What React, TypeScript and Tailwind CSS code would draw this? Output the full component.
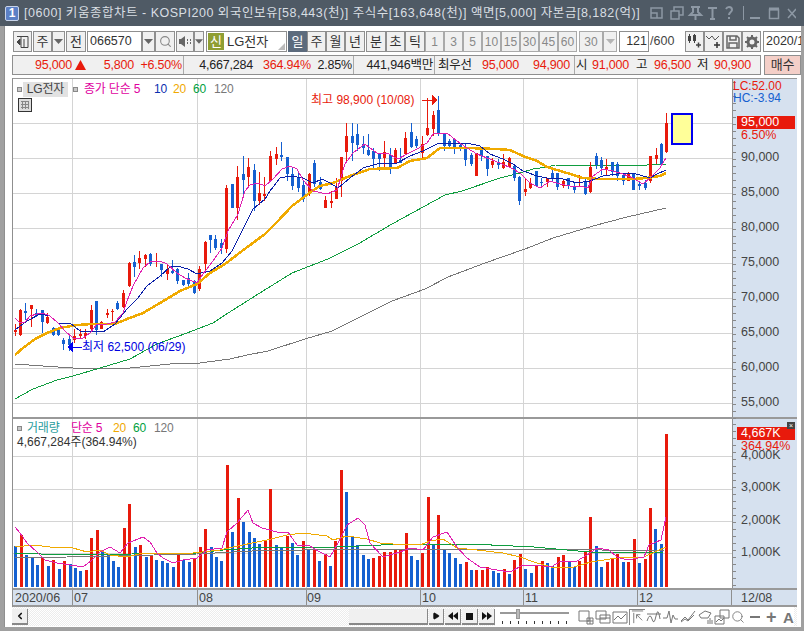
import type { ReactNode } from "react";
import { ChevronLeft, Play, Search } from "lucide-react";

// x, high, body top, body bottom, low, colour (page pixels)
type Candle = [number, number, number, number, number, "r" | "b"];

const candles: Candle[] = [
  [15, 323, 329, 331, 335, "r"], [20, 308, 309, 334, 335, "r"], [25, 302, 310, 312, 319, "b"], [31, 304, 304, 308, 326, "r"],
  [36, 308, 312, 315, 316, "b"], [42, 309, 309, 321, 332, "b"], [47, 312, 316, 322, 323, "r"], [53, 326, 327, 334, 335, "b"],
  [58, 327, 327, 334, 335, "b"], [63, 337, 339, 343, 349, "b"], [69, 335, 338, 344, 350, "b"], [74, 328, 335, 339, 342, "r"],
  [80, 328, 333, 335, 337, "r"], [85, 328, 332, 335, 338, "r"], [91, 304, 309, 328, 329, "r"], [96, 300, 300, 329, 334, "b"],
  [101, 320, 321, 328, 328, "r"], [107, 308, 312, 314, 317, "r"], [112, 308, 310, 311, 320, "r"], [117, 300, 302, 308, 309, "b"],
  [123, 289, 292, 306, 307, "r"], [129, 261, 262, 285, 286, "r"], [134, 254, 261, 266, 276, "b"], [139, 250, 257, 262, 268, "r"],
  [145, 253, 254, 258, 266, "r"], [150, 252, 253, 263, 265, "b"], [156, 252, 260, 261, 266, "r"], [161, 263, 263, 269, 276, "b"],
  [167, 263, 268, 273, 279, "r"], [172, 259, 270, 272, 273, "b"], [177, 267, 268, 280, 283, "b"], [183, 279, 279, 284, 285, "b"],
  [188, 272, 277, 283, 285, "b"], [194, 279, 280, 292, 293, "b"], [199, 265, 268, 288, 290, "r"], [205, 240, 241, 263, 270, "r"],
  [210, 234, 234, 239, 252, "b"], [215, 234, 238, 247, 249, "b"], [221, 238, 242, 247, 253, "b"], [226, 184, 187, 248, 252, "r"],
  [232, 183, 183, 207, 207, "b"], [237, 165, 176, 207, 219, "r"], [243, 155, 173, 179, 193, "b"], [248, 157, 166, 176, 185, "r"],
  [254, 163, 169, 200, 210, "b"], [259, 171, 192, 200, 204, "r"], [264, 176, 193, 195, 200, "r"], [270, 150, 155, 180, 181, "r"],
  [276, 146, 153, 158, 164, "r"], [281, 141, 154, 156, 160, "b"], [287, 156, 156, 173, 180, "b"], [292, 166, 173, 185, 189, "b"],
  [298, 170, 177, 187, 191, "b"], [303, 180, 184, 198, 201, "b"], [309, 172, 173, 192, 195, "r"], [314, 159, 162, 183, 186, "b"],
  [320, 176, 181, 188, 189, "b"], [325, 195, 199, 207, 207, "r"], [331, 190, 200, 202, 207, "r"], [336, 177, 186, 198, 198, "r"],
  [341, 156, 156, 180, 196, "r"], [346, 122, 135, 151, 160, "r"], [352, 122, 135, 142, 160, "b"], [357, 123, 133, 144, 150, "b"],
  [363, 135, 143, 147, 153, "b"], [368, 133, 149, 154, 155, "b"], [373, 147, 150, 158, 168, "b"], [379, 152, 152, 158, 170, "b"],
  [384, 140, 151, 157, 166, "r"], [390, 147, 154, 167, 173, "b"], [395, 147, 149, 162, 162, "r"], [400, 147, 159, 162, 162, "b"],
  [405, 131, 137, 153, 153, "r"], [411, 122, 131, 146, 147, "b"], [416, 135, 138, 145, 147, "b"], [422, 135, 143, 152, 158, "r"],
  [427, 97, 127, 134, 135, "r"], [433, 110, 114, 128, 135, "r"], [438, 95, 109, 133, 135, "b"], [444, 132, 132, 145, 150, "b"],
  [449, 138, 140, 145, 148, "b"], [454, 137, 138, 147, 153, "b"], [460, 142, 144, 147, 150, "b"], [465, 143, 146, 159, 165, "b"],
  [471, 152, 154, 163, 165, "b"], [476, 152, 152, 175, 175, "r"], [481, 147, 147, 155, 160, "b"], [487, 155, 155, 168, 175, "b"],
  [492, 157, 160, 164, 167, "r"], [498, 158, 161, 164, 168, "b"], [503, 153, 161, 167, 168, "r"], [509, 156, 157, 166, 167, "r"],
  [514, 164, 165, 177, 180, "b"], [519, 175, 176, 200, 204, "b"], [525, 178, 188, 191, 195, "r"], [530, 177, 182, 187, 188, "r"],
  [536, 170, 170, 185, 185, "b"], [541, 177, 181, 182, 187, "b"], [547, 177, 177, 181, 186, "r"], [552, 168, 172, 177, 180, "b"],
  [557, 172, 172, 186, 189, "b"], [563, 178, 180, 185, 187, "r"], [568, 177, 177, 184, 188, "b"], [574, 182, 185, 189, 192, "b"],
  [579, 174, 181, 182, 185, "r"], [585, 178, 181, 193, 194, "b"], [590, 161, 166, 191, 192, "r"], [596, 152, 155, 164, 168, "b"],
  [601, 156, 159, 167, 174, "b"], [606, 158, 166, 168, 174, "r"], [612, 161, 161, 171, 175, "b"], [617, 161, 163, 175, 180, "b"],
  [623, 173, 174, 180, 184, "b"], [628, 171, 172, 180, 180, "r"], [633, 172, 172, 189, 189, "b"], [639, 180, 183, 185, 189, "b"],
  [645, 179, 182, 187, 189, "b"], [650, 155, 155, 180, 182, "r"], [656, 147, 154, 158, 163, "r"], [661, 142, 143, 164, 165, "b"],
  [666, 112, 122, 151, 152, "r"],
];

const ma5 = "15,317 20,322 25,321 30,315 37,313 43,312 50,315 58,322 65,330 73,337 83,337 90,332 97,323 107,323 115,321 123,312 127,300 133,285 143,267 150,261 160,260 167,263 177,272 185,277 197,282 203,273 213,260 222,247 228,230 238,213 245,190 250,184 258,182 265,185 273,178 282,168 290,165 297,168 303,179 313,190 327,193 337,189 345,163 353,152 365,143 377,152 387,152 398,158 407,153 417,148 427,142 433,133 447,132 457,140 467,147 477,153 487,157 500,162 513,168 520,172 530,182 540,187 550,180 560,183 570,185 580,185 588,187 593,175 603,168 613,170 623,173 633,177 643,183 650,177 660,167 666,157";
const ma10 = "15,329 27,320 40,313 50,315 58,322 70,322 80,330 97,330 103,331 115,323 127,308 138,297 147,285 160,275 170,266 177,265 188,268 197,273 210,270 222,262 232,250 242,230 253,208 265,198 270,190 280,177 290,175 303,177 313,182 322,178 330,182 338,187 350,177 363,167 380,162 397,162 410,155 423,150 437,143 450,142 467,142 480,145 490,153 503,158 513,163 523,170 537,175 547,177 563,178 577,182 590,180 603,175 617,173 633,172 650,177 657,173 666,169";
const ma20 = "15,354 23,347 35,338 47,332 60,327 77,324 92,323 115,323 127,318 143,312 160,302 180,290 197,283 210,272 225,263 242,250 265,233 277,221 292,205 312,190 320,185 333,182 350,175 370,168 397,167 410,160 427,157 440,147 467,147 497,148 510,149 523,155 537,160 547,166 567,172 583,177 600,178 617,178 633,178 647,177 660,175 666,172";
const ma60 = "15,398 33,388 57,379 73,375 100,367 130,358 157,343 187,332 213,322 225,314 255,295 292,272 328,258 358,243 392,223 445,194 462,190 500,177 520,172 533,168 547,166 555,164 590,165 617,164 647,164 666,163";
const ma120 = "15,363 43,365 73,367 130,367 170,363 200,362 230,358 247,354 268,350 305,338 332,330 358,317 392,300 425,288 448,276 485,262 525,248 553,237 593,225 627,216 666,207";

const volTops = [
  546, 535, 555, 558, 565, 557, 566, 560, 569, 561, 564, 568, 571, 570, 538, 530, 550, 555, 561, 567, 528, 504, 547, 545,
  557, 555, 560, 561, 563, 567, 555, 560, 562, 558, 547, 529, 547, 557, 561, 465, 532, 498, 522, 532, 538, 544, 540, 489,
  545, 548, 536, 543, 555, 541, 550, 549, 561, 554, 566, 541, 470, 492, 537, 545, 555, 559, 558, 556, 552, 552, 550, 550,
  533, 556, 560, 553, 497, 545, 515, 549, 553, 558, 564, 562, 570, 570, 570, 567, 571, 573, 569, 574, 560, 554, 569, 573,
  566, 561, 563, 566, 557, 555, 561, 567, 561, 552, 517, 546, 567, 562, 558, 554, 562, 562, 539, 563, 559, 508, 529, 544, 434,
];
const volColors =
  "brbbbrbrbrbbbrrrbbbbrrbrbrbbbbrbbrrrbbbrbrbbbbrr" +
  "bbrbbrbrbrbrrbbbbbrrrrrrrbbrrbrbbbbrbrrrbbrbrrbbr" +
  "rbbrrbbrrrbbrrrbrrbrrbbr";

const vMa5 = "15,527 20,533 27,543 37,552 45,560 57,563 70,565 83,567 92,560 100,552 110,547 120,553 128,543 143,537 150,542 157,553 163,558 173,563 183,560 197,558 207,550 222,548 227,532 237,523 248,510 253,523 262,528 270,530 280,533 288,532 297,545 308,545 320,552 330,557 338,543 347,525 358,518 365,525 370,543 383,557 400,552 410,548 423,550 433,537 447,532 457,547 467,558 480,567 497,570 510,572 523,565 534,565 551,567 561,561 577,561 587,555 597,548 609,550 617,557 627,560 644,557 649,545 661,540 666,517";
const vMa20 = "15,547 33,545 50,547 73,548 87,552 100,550 110,555 127,557 143,553 193,553 220,550 233,547 267,540 287,535 303,533 327,536 333,540 347,536 367,539 380,543 393,544 420,545 430,541 443,539 457,548 477,550 503,553 520,557 534,562 551,567 574,567 591,562 617,558 644,557 666,547";
const vMa60 = "15,553 67,555 197,553 223,550 267,547 337,547 403,544 470,544 534,547 567,550 601,553 664,552";
const vMa120 = "15,558 67,557 197,554 270,550 303,550 540,549 664,551";

const RED = "#e81a0c";
const BLUE = "#1560d0";

const priceGrid = [122, 157, 192, 227, 262, 297, 332, 367, 402];
const priceLabels = [
  ["90,000", 157], ["85,000", 192], ["80,000", 227], ["75,000", 262], ["70,000", 297],
  ["65,000", 332], ["60,000", 367], ["55,000", 402],
] as const;
const volGrid = [456, 489, 521, 553];
const volLabels = [["4,000K", 456], ["3,000K", 488], ["2,000K", 521], ["1,000K", 553]] as const;
const timeGrid = [72, 197, 306, 420, 523, 637];
const dates = [["2020/06", 15], ["07", 74], ["08", 199], ["09", 307], ["10", 422], ["11", 525], ["12", 639], ["12/08", 741]] as const;

function Btn({ className = "", children }: { className?: string; children?: ReactNode }) {
  return (
    <div className={`flex h-[21px] shrink-0 items-center justify-center border border-[#8f8f8f] bg-[#f0f0f0] text-[13px] text-[#333] ${className}`}>
      {children}
    </div>
  );
}

function Caret({ light }: { light?: boolean }) {
  return (
    <svg width="9" height="5" viewBox="0 0 9 5">
      <path d="M0 0h9L4.500 5z" fill={light ? "#b4b4b4" : "#666"} />
    </svg>
  );
}

function Val({ w, red, children }: { w: string; red?: boolean; children: ReactNode }) {
  return <span className={`shrink-0 text-right ${w} ${red ? "text-[#e81a0c]" : "text-[#222]"}`}>{children}</span>;
}

function TitleBar() {
  return (
    <div className="flex h-[26px] shrink-0 items-center bg-[#4f5a65] pl-[5px] pr-[8px] text-[#d9dee3]">
      <div className="flex h-[15px] w-[14px] items-center justify-center rounded-[2px] border border-[#c8d4ea] bg-[#5b80c6] text-[12px] font-bold leading-none text-white">1</div>
      <span className="ml-[5px] whitespace-nowrap text-[12.5px] tracking-[0.52px]">
        [0600] 키움종합차트 - KOSPI200 외국인보유[58,443(천)] 주식수[163,648(천)] 액면[5,000] 자본금[8,182(억)]
      </span>
      <svg className="ml-auto" width="146" height="14" viewBox="0 0 146 14" fill="none" stroke="#8d98a4" strokeWidth="1.500">
        <path d="M1 2h11v10H1zM1 7h6v5" />
        <path d="M21 5h8v8h-8zM24 5V1h9v8h-4" />
        <path d="M41 1h9M43 1v5l-3 3h11l-3-3V1M45.500 9v5" strokeWidth="2" />
        <path d="M58 2h9M62.500 2v11M60 13h5" strokeWidth="2" />
        <path d="M76 3q1-2 3-2 3 0 3 3c0 2-3 2-3 5M79 11v2" strokeWidth="2" />
        <path d="M93.500 0v14" strokeWidth="1" />
        <path d="M100 12h10" strokeWidth="2" />
        <path d="M119.500 3.500h9v9h-9z" />
        <path d="M119 3h10" strokeWidth="3" />
        <path d="M138 3l8 9M146 3l-8 9" />
      </svg>
    </div>
  );
}

function Toolbar() {
  return (
    <div className="flex h-[21px] shrink-0 items-center overflow-hidden pl-[13px]">
      <Btn className="w-[19px]">
        <svg width="13" height="13" viewBox="0 0 13 13" fill="none" stroke="#444">
          <path d="M1 1.500h11v11H5M5 1.500v11" />
          <path d="M4 4v6L1 7z" fill="#444" />
          <path d="M8 4v8" />
        </svg>
      </Btn>
      <Btn className="ml-[1px] w-[19px]">주</Btn>
      <Btn className="w-[13px]"><Caret /></Btn>
      <Btn className="ml-[1px] w-[20px]">전</Btn>
      <Btn className="ml-[1px] w-[55px] justify-start !bg-white pl-[2px] !text-[12.5px]">066570</Btn>
      <Btn className="w-[13px]"><Caret /></Btn>
      <Btn className="w-[20px]"><Search size={13} strokeWidth={2} color="#888" /></Btn>
      <Btn className="ml-[1px] w-[18px]">
        <svg width="13" height="11" viewBox="0 0 13 11">
          <path d="M0 3h2l4-3v11L2 8H0z" fill="#666" />
          <path d="M8 3h1v2H8zM11 3h1v2h-1zM8 6h1v2H8zM11 6h1v2h-1z" fill="#666" />
        </svg>
      </Btn>
      <Btn className="w-[10px]"><Caret /></Btn>
      <div className="relative ml-[2px] flex h-[21px] w-[81px] shrink-0 items-center border border-[#8f8f8f] bg-white">
        <span className="ml-[1px] flex h-[17px] w-[16px] items-center justify-center bg-[#8f9e33] text-[13px] text-white">신</span>
        <span className="ml-[3px] text-[13px] text-[#333]">LG전자</span>
        <span className="absolute bottom-[1px] right-[1px] h-0 w-0 border-b-[7px] border-l-[7px] border-b-[#bbb] border-l-transparent" />
      </div>
      <Btn className="ml-[1px] w-[19px] !border-[#5c6b7d] !bg-[#5c6b7d] !text-white">일</Btn>
      <Btn className="w-[19px]">주</Btn>
      <Btn className="w-[19px]">월</Btn>
      <Btn className="w-[20px]">년</Btn>
      <Btn className="ml-[1px] w-[20px]">분</Btn>
      <Btn className="w-[19px]">초</Btn>
      <Btn className="w-[20px]">틱</Btn>
      {["1", "3", "5", "10", "15", "30", "45", "60"].map((n) => (
        <Btn key={n} className="w-[19px] !border-[#aaa] !text-[12px] !text-[#888]">{n}</Btn>
      ))}
      <Btn className="ml-[2px] w-[24px] !border-[#aaa] !text-[12px] !text-[#888]">30</Btn>
      <Btn className="w-[14px] !border-[#aaa]"><Caret light /></Btn>
      <Btn className="ml-[2px] w-[30px] justify-end !bg-white pr-[1px] !text-[12.5px]">121</Btn>
      <span className="w-[36px] shrink-0 pl-[1px] text-[12.5px] text-[#444]">/600</span>
      <Btn className="w-[19px]">
        <svg width="15" height="15" viewBox="0 0 15 15">
          <path d="M1 2h3v5H1zM6 1h3v6H6z" fill="#444" />
          <path d="M2.500 0v9M7.500 0v9" stroke="#444" />
          <path d="M9 11h5M11.500 8.500v5" stroke="#444" strokeWidth="1.500" />
        </svg>
      </Btn>
      <Btn className="w-[19px]">
        <svg width="15" height="15" viewBox="0 0 15 15" fill="none" stroke="#555">
          <path d="M0 2l3 3 3-3 3 4 4-4" />
          <path d="M8 11h6M11 8v6" stroke="#333" strokeWidth="1.500" />
        </svg>
      </Btn>
      <Btn className="w-[19px]">
        <svg width="14" height="14" viewBox="0 0 14 14" fill="none" stroke="#666" strokeWidth="1.500">
          <path d="M1 1h10l2 2v10H1zM4 1v4h6V1M3 13V8h8v5" />
        </svg>
      </Btn>
      <Btn className="w-[19px]">
        <svg width="14" height="14" viewBox="0 0 14 14">
          <circle cx="7" cy="7" r="4" fill="none" stroke="#666" strokeWidth="3" />
          <path d="M7 0v3M7 11v3M0 7h3M11 7h3M2 2l2 2M10 10l2 2M12 2l-2 2M2 12l2-2" stroke="#666" strokeWidth="2" />
        </svg>
      </Btn>
      <Btn className="ml-[2px] w-[60px] justify-start !bg-white pl-[2px] !text-[12.5px]">2020/12/08</Btn>
    </div>
  );
}

function InfoRow() {
  return (
    <div className="mt-[3px] flex h-[20px] shrink-0 pl-[12px] text-[12.5px] tracking-[-0.2px]">
      <div className="flex w-[750px] items-center whitespace-nowrap border border-[#8f8f8f] bg-[#f0f0f0]">
        <Val w="w-[59px]" red>95,000</Val>
        <svg className="ml-[3px] shrink-0" width="11" height="10" viewBox="0 0 11 10"><path d="M5.500 0L11 10H0z" fill={RED} /></svg>
        <Val w="w-[48px]" red>5,800</Val>
        <Val w="w-[48px]" red>+6.50%</Val>
        <div className="ml-[1px] h-full w-px shrink-0 bg-[#aaa]" />
        <Val w="w-[69px]">4,667,284</Val>
        <Val w="w-[58px]" red>364.94%</Val>
        <Val w="w-[41px]">2.85%</Val>
        <div className="ml-[1px] h-full w-px shrink-0 bg-[#aaa]" />
        <Val w="w-[79px]">441,946백만</Val>
        <div className="ml-[1px] h-full w-px shrink-0 bg-[#aaa]" />
        <span className="ml-[3px] w-[38px] shrink-0 text-[#222]">최우선</span>
        <Val w="w-[43px]" red>95,000</Val>
        <Val w="w-[51px]" red>94,900</Val>
        <div className="ml-[4px] h-full w-px shrink-0 bg-[#aaa]" />
        <span className="ml-[1px] w-[12px] shrink-0 text-[#222]">시</span>
        <Val w="w-[41px]" red>91,000</Val>
        <span className="ml-[7px] w-[12px] shrink-0 text-[#222]">고</span>
        <Val w="w-[43px]" red>96,500</Val>
        <span className="ml-[6px] w-[12px] shrink-0 text-[#222]">저</span>
        <Val w="w-[42px]" red>90,900</Val>
      </div>
      <div className="ml-[3px] flex w-[37px] items-center justify-center border border-[#8f8f8f] bg-[#f4cfc8] text-[13px] text-[#333]">매수</div>
    </div>
  );
}

function Lines({ pts, color, width = 1 }: { pts: string; color: string; width?: number }) {
  return <polyline points={pts} fill="none" stroke={color} strokeWidth={width} />;
}

function GridLines({ rows, top, bottom }: { rows: number[]; top: number; bottom: number }) {
  return (
    <g stroke="#d4d4d4">
      {rows.map((y) => <line key={y} x1="13" x2="732" y1={y + 0.5} y2={y + 0.5} />)}
      {timeGrid.map((x) => <line key={x} x1={x + 0.5} x2={x + 0.5} y1={top} y2={bottom} />)}
    </g>
  );
}

function PriceChart() {
  return (
    <svg className="block" width="719" height="340" viewBox="13 78 719 340" shapeRendering="crispEdges">
      <GridLines rows={priceGrid} top={78} bottom={418} />
      <Lines pts={ma120} color="#777" />
      <Lines pts={ma60} color="#0f9d3f" />
      {candles.map(([x, hi, top, bot, lo, c]) => (
        <g key={x} fill={c === "r" ? RED : BLUE}>
          <rect x={x} y={hi} width="1" height={lo - hi} />
          <rect x={x - 1} y={top} width="3" height={Math.max(bot - top, 1)} />
        </g>
      ))}
      <Lines pts={ma20} color="#f0aa00" width={2.5} />
      <Lines pts={ma10} color="#0a1fa8" />
      <Lines pts={ma5} color="#e020b0" />
      <rect x="672" y="113" width="20" height="30" fill="#ffff99" stroke="#0000f0" strokeWidth="2" />
      <path d="M422 99h10" stroke={RED} />
      <path d="M432 93l5 6-5 6z" fill={RED} />
      <path d="M73 346h9" stroke="#0000f0" />
      <path d="M73 340l-6 6 6 6z" fill="#0000f0" />
    </svg>
  );
}

function VolumeChart() {
  return (
    <svg className="block" width="719" height="169" viewBox="13 419 719 169" shapeRendering="crispEdges">
      <GridLines rows={volGrid} top={419} bottom={588} />
      {volTops.map((top, i) => (
        <rect key={i} x={Math.round(15.3 + i * 5.425) - 1} y={top} width="3" height={587 - top} fill={volColors[i] === "r" ? RED : BLUE} />
      ))}
      <Lines pts={vMa120} color="#777" />
      <Lines pts={vMa60} color="#0f9d3f" />
      <Lines pts={vMa20} color="#f0aa00" />
      <Lines pts={vMa5} color="#e020b0" />
    </svg>
  );
}

function AxisTicks({ from, to }: { from: number; to: number }) {
  const ticks: number[] = [];
  for (let y = from; y < to; y += 7) ticks.push(y);
  return (
    <svg className="absolute left-0 top-0" width="8" height={to} shapeRendering="crispEdges">
      {ticks.map((y) => <line key={y} x1="0" x2="3" y1={y + 0.5} y2={y + 0.5} stroke="#888" />)}
    </svg>
  );
}

function Square({ className = "" }: { className?: string }) {
  return <span className={`inline-block h-[5px] w-[5px] shrink-0 border border-[#888] bg-[#c8c8c8] ${className}`} />;
}

function Charts() {
  return (
    <div className="ml-[12px] mt-[3px] w-[785px] shrink-0 border-l border-[#8f8f8f] text-[12.5px]">
      {/* price panel */}
      <div className="flex h-[341px] border-b-2 border-t border-[#999]">
        <div className="relative w-[719px] overflow-hidden">
          <PriceChart />
          <div className="absolute left-[4px] top-[1px] flex items-center text-[12px] tracking-[-0.2px]">
            <Square />
            <span className="ml-[1px] flex h-[15px] w-[45px] items-center justify-center bg-[#e2e2e2] text-[#444]">LG전자</span>
            <Square className="ml-[5px]" />
            <span className="ml-[6px] w-[70px] text-[#e000a0]">종가 단순 5</span>
            <span className="w-[19px] text-[#0a2fb0]">10</span>
            <span className="w-[20px] text-[#f0a800]">20</span>
            <span className="w-[21px] text-[#00a040]">60</span>
            <span className="text-[#777]">120</span>
          </div>
          <svg className="absolute left-[5px] top-[19px]" width="14" height="14" viewBox="0 0 14 14" fill="#ddd" stroke="#333" shapeRendering="crispEdges">
            <rect x="0.500" y="0.500" width="13" height="13" />
            <path d="M3 3.500h8M3 6.500h8M3 9.500h8M4.500 3v8M7.500 3v8M10.500 3v8" stroke="#888" />
          </svg>
          <span className="absolute left-[298px] top-[12px] whitespace-nowrap text-[12px] text-[#e81a0c]">최고 98,900 (10/08)</span>
          <span className="absolute left-[69px] top-[259px] whitespace-nowrap text-[12px] text-[#0000e0]">최저 62,500 (06/29)</span>
        </div>
        <div className="relative w-[65px] border-l border-[#8f8f8f] bg-[#d6e1ef]">
          <AxisTicks from={3} to={340} />
          <span className="absolute left-0 top-[1px] text-[12px] leading-none text-[#e81a0c]">LC:52.00</span>
          <span className="absolute left-0 top-[13px] text-[12px] leading-none text-[#1560d0]">HC:-3.94</span>
          <span className="absolute left-[4px] top-[37px] flex h-[13px] w-[58px] items-center bg-[#e81a0c] pl-[4px] text-white">95,000</span>
          <span className="absolute left-[8px] top-[50px] leading-none text-[#e81a0c]">6.50%</span>
          {priceLabels.map(([t, y]) => (
            <span key={t} className="absolute left-[8px] leading-none text-[#444]" style={{ top: y - 85 }}>{t}</span>
          ))}
        </div>
      </div>
      {/* volume panel */}
      <div className="flex h-[169px]">
        <div className="relative w-[719px] overflow-hidden">
          <VolumeChart />
          <div className="absolute left-[4px] top-0 flex items-center text-[12px] tracking-[-0.2px]">
            <Square />
            <span className="ml-[5px] w-[44px] text-[#2a9d9d]">거래량</span>
            <span className="w-[42px] text-[#e000a0]">단순 5</span>
            <span className="w-[20px] text-[#f0a800]">20</span>
            <span className="w-[21px] text-[#00a040]">60</span>
            <span className="text-[#777]">120</span>
          </div>
          <span className="absolute left-[4px] top-[14px] whitespace-nowrap text-[12px] text-[#333]">4,667,284주(364.94%)</span>
        </div>
        <div className="relative w-[65px] border-l border-[#8f8f8f] bg-[#d6e1ef]">
          <AxisTicks from={5} to={168} />
          {volLabels.map(([t, y]) => (
            <span key={t} className="absolute left-[8px] leading-none text-[#444]" style={{ top: y - 426 }}>{t}</span>
          ))}
          <span className="absolute left-[4px] top-[8px] flex h-[13px] w-[58px] items-center bg-[#e81a0c] pl-[4px] text-white">4,667K</span>
          <span className="absolute left-[8px] top-[21px] leading-none text-[#e81a0c]">364.94%</span>
          <span className="absolute left-[54px] top-[3px] flex h-[7px] w-[8px] items-center justify-center bg-[#444] text-[7px] leading-none text-white">×</span>
        </div>
      </div>
      {/* date axis */}
      <div className="relative h-[19px] border-y-2 border-[#999] bg-[#d6e1ef]">
        {dates.map(([t, x]) => (
          <span key={t} className="absolute top-[1px] leading-[14px] text-[#444]" style={{ left: x - 13 }}>{t}</span>
        ))}
        {[72, 197, 306, 420, 523, 637, 731].map((x) => (
          <span key={x} className="absolute bottom-0 top-0 w-px bg-[#8f8f8f]" style={{ left: x - 13 }} />
        ))}
      </div>
    </div>
  );
}

function ToolIcon({ d, active }: { d: string; active?: boolean }) {
  return (
    <svg className={active ? "border-l border-t border-[#888] bg-white" : ""} width="16" height="16" viewBox="0 0 16 16" fill="none" stroke="#777">
      <path d={d} />
    </svg>
  );
}

function BottomBar() {
  const transport = ["w-[15px]", "w-[16px]", "w-[16px]", "w-[16px]"];
  return (
    <div className="ml-[12px] flex h-[20px] w-[785px] shrink-0 items-center bg-[repeating-conic-gradient(#ffffff_0_25%,#ececec_0_50%)] bg-[length:2px_2px] pr-[3px]">
      <div className="flex h-[16px] w-[16px] items-center justify-center border-b-2 border-r border-[#888] bg-[#f0f0f0]">
        <ChevronLeft size={10} strokeWidth={4} color="#111" />
      </div>
      <div className="ml-auto flex items-center">
        <div className="h-[16px] w-[79px] border-b-2 border-r border-[#888] bg-[#f0f0f0]" />
        {transport.map((w, i) => (
          <div key={i} className={`ml-[1px] flex h-[16px] items-center justify-center border-b-2 border-r border-[#888] bg-[#f0f0f0] ${w}`}>
            {i === 0 && <Play size={8} fill="#111" color="#111" />}
            {i === 1 && <svg width="10" height="8" viewBox="0 0 10 8"><path d="M5 0v8L0 4zM10 0v8L5 4z" fill="#111" /></svg>}
            {i === 2 && <span className="h-[7px] w-[7px] bg-[#111]" />}
            {i === 3 && <svg width="10" height="8" viewBox="0 0 10 8"><path d="M0 0v8l5-4zM5 0v8l5-4z" fill="#111" /></svg>}
          </div>
        ))}
        <div className="flex h-[20px] items-center bg-white pl-[5px] pr-[8px]">
          <svg width="70" height="18" viewBox="0 0 70 18" shapeRendering="crispEdges">
            <rect x="0" y="4" width="69" height="2" fill="#999" />
            <rect x="16" y="1" width="3" height="9" fill="#bbb" stroke="#999" />
            {[2, 10, 18, 26, 34, 42, 50, 58, 66].map((x) => <rect key={x} x={x} y="13" width="1" height="3" fill="#333" />)}
          </svg>
        </div>
        <div className="flex h-[20px] items-center bg-white">
          <div className="flex gap-[1px]">
            <ToolIcon d="M1 2h10v10H1zM9 9h6v6H9zM12 9v6M9 12h6" />
            <ToolIcon d="M1 2h10v8H1zM5 6h10v8H5zM5 9h10" />
            <ToolIcon d="M1 3h14M1 14h14M1 3v11M15 3v11M2 11l4-4 3 3 5-5" />
            <ToolIcon active d="M2 1h12M4 3v11M7 5l6 6M7 5v4M7 5h4" />
            <ToolIcon d="M1 12q3-9 5-2t4-3 4 3M1 5h14" />
            <ToolIcon d="M0 9h4l2-7 2 12 2-8 2 4h3" />
            <ToolIcon d="M1 12l4-4 3 3 7-9M1 13l4-3 3 2 6-6" />
            <ToolIcon d="M2 6l6-4 6 2-3 5H4zM11 11v4M13 9v6M15 11v4" />
            <ToolIcon d="M6 1h9v8H6zM1 7h9v8H1zM2 13l3-3 2 2 3-3" />
          </div>
          <Search size={14} strokeWidth={1.500} color="#777" className="ml-[1px]" />
          <span className="ml-[5px] h-[2px] w-[10px] bg-[#777]" />
          <span className="ml-[6px] w-[11px] text-[18px] font-bold leading-none text-[#777]">+</span>
          <span className="ml-[6px] w-[11px] text-[15px] font-bold leading-none text-[#777]">A</span>
        </div>
      </div>
    </div>
  );
}

export default function App() {
  return (
    <div className="flex h-[631px] w-[804px] flex-col overflow-hidden bg-[#a0a0a0] font-['Liberation_Sans','Noto_Sans_CJK_KR',sans-serif]">
      <TitleBar />
      <div className="ml-[4px] mr-[3px] flex flex-1 flex-col overflow-hidden border-l border-[#8f8f8f] bg-white pb-[1px]">
        <div className="-ml-[5px] flex flex-1 flex-col overflow-hidden pt-[5px]">
          <Toolbar />
          <InfoRow />
          <Charts />
          <BottomBar />
        </div>
      </div>
      <div className="h-[4px] shrink-0 bg-[#a0a0a0]" />
    </div>
  );
}
